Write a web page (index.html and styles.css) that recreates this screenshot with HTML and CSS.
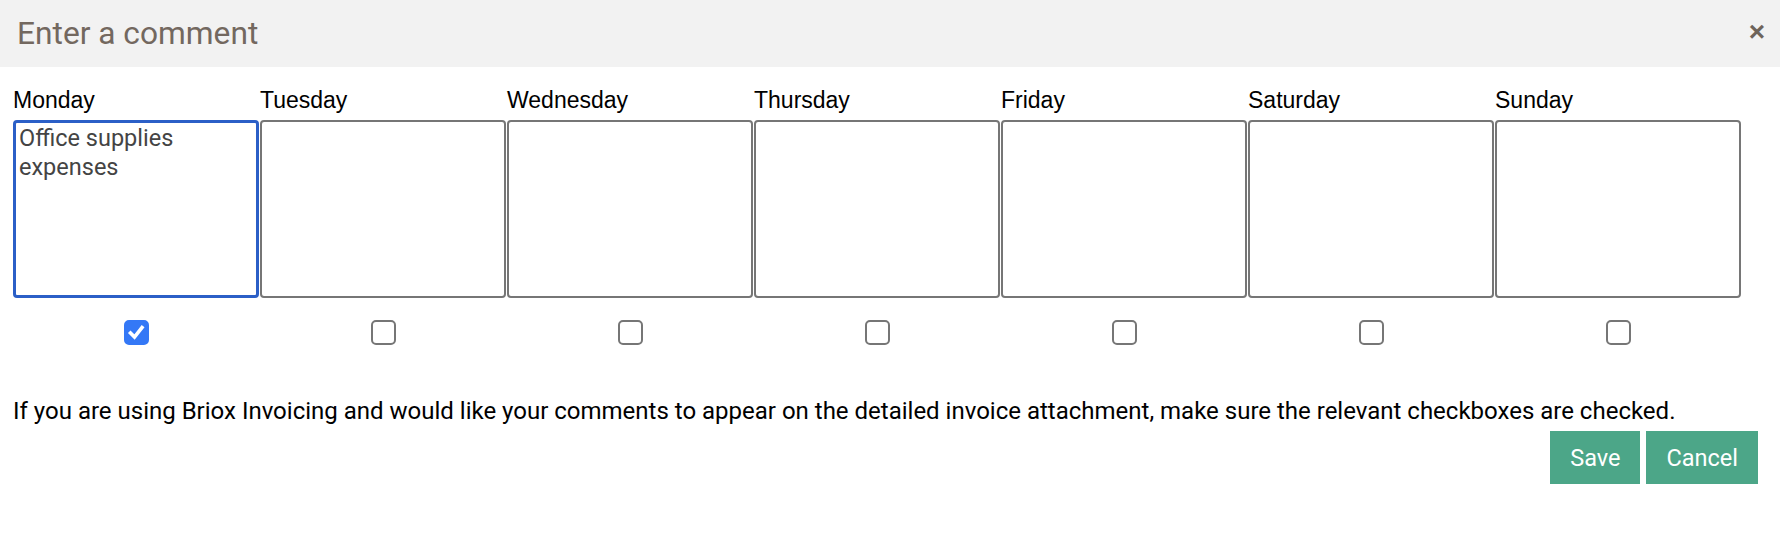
FILE: index.html
```html
<!DOCTYPE html>
<html lang="en">
<head>
  <meta charset="UTF-8">
  <meta name="viewport" content="width=device-width, initial-scale=1.0">
  <title>Enter a comment</title>
  <link rel="stylesheet" href="styles.css">
</head>
<body>
  <div class="modal">
    <div class="modal-header">
      <h4 class="modal-title">Enter a comment</h4>
      <button class="close" aria-label="Close">&times;</button>
    </div>
    <div class="modal-body">
      <div class="days">
        <div class="day">
          <label>Monday</label>
          <textarea class="focused">Office supplies expenses</textarea>
          <span class="tick">
            <input type="checkbox" checked>
            <svg class="mark" viewBox="0 0 25 25"><path d="M6.5 13 L10.5 17 L18 7.5" fill="none" stroke="#fff" stroke-width="3.6" stroke-linecap="square"/></svg>
          </span>
        </div>
        <div class="day">
          <label>Tuesday</label>
          <textarea></textarea>
          <span class="tick"><input type="checkbox"></span>
        </div>
        <div class="day">
          <label>Wednesday</label>
          <textarea></textarea>
          <span class="tick"><input type="checkbox"></span>
        </div>
        <div class="day">
          <label>Thursday</label>
          <textarea></textarea>
          <span class="tick"><input type="checkbox"></span>
        </div>
        <div class="day">
          <label>Friday</label>
          <textarea></textarea>
          <span class="tick"><input type="checkbox"></span>
        </div>
        <div class="day">
          <label>Saturday</label>
          <textarea></textarea>
          <span class="tick"><input type="checkbox"></span>
        </div>
        <div class="day">
          <label>Sunday</label>
          <textarea></textarea>
          <span class="tick"><input type="checkbox"></span>
        </div>
      </div>
      <p class="note">If you are using Briox Invoicing and would like your comments to appear on the detailed invoice attachment, make sure the relevant checkboxes are checked.</p>
      <div class="actions">
        <button class="btn">Save</button>
        <button class="btn">Cancel</button>
      </div>
    </div>
  </div>
</body>
</html>
```

FILE: styles.css
```css
*, *::before, *::after { box-sizing: border-box; }
html, body {
  margin: 0;
  padding: 0;
  background: white;
  font-family: Roboto, 'Liberation Sans', sans-serif;
  color: #000;
}
.modal-header {
  height: 67px;
  display: flex;
  align-items: center;
  justify-content: space-between;
  padding: 0 7px 0 17px;
  background: #f2f2f2;
}
.modal-title {
  margin: 0;
  font-size: 31.7px;
  font-weight: 400;
  color: #73685f;
}
.close {
  background: none;
  border: none;
  padding: 0 8px 4px;
  font-family: 'Liberation Sans', sans-serif;
  font-size: 28px;
  font-weight: bold;
  line-height: 1;
  color: #6e645b;
  cursor: pointer;
}
.modal-body { padding: 20px 22px 0 13px; }
.days {
  display: grid;
  grid-template-columns: repeat(7, 246px);
  column-gap: 1px;
}
.day {
  display: flex;
  flex-direction: column;
}
.day label {
  font-family: 'Liberation Sans', sans-serif;
  font-size: 23px;
  line-height: 26px;
  margin-bottom: 7px;
}
textarea {
  width: 100%;
  height: 178px;
  padding: 2px 4px;
  border: 2px solid #767676;
  border-radius: 4px;
  resize: none;
  font-family: Roboto, sans-serif;
  font-size: 23.5px;
  line-height: 29px;
  color: #444;
  outline: none;
}
textarea.focused {
  border: 3px solid #2b5fc7;
  padding: 1px 3px;
}
.tick {
  position: relative;
  align-self: center;
  width: 25px;
  height: 25px;
  margin-top: 22px;
}
.tick input {
  appearance: none;
  -webkit-appearance: none;
  display: block;
  margin: 0;
  width: 25px;
  height: 25px;
  border: 2px solid #767676;
  border-radius: 5px;
  background: white;
}
.tick input:checked {
  background: #3478f6;
  border-color: #3478f6;
}
.mark {
  position: absolute;
  left: 0;
  top: 0;
  width: 25px;
  height: 25px;
  pointer-events: none;
}
.note {
  margin: 52px 0 0;
  font-size: 24px;
  line-height: 28px;
}
.actions {
  display: flex;
  justify-content: flex-end;
  gap: 6px;
  margin-top: 6px;
}
.btn {
  height: 53px;
  padding: 0 20px;
  border: none;
  background: #4ca688;
  color: white;
  font-family: Roboto, sans-serif;
  font-size: 23.5px;
  cursor: pointer;
}
```
